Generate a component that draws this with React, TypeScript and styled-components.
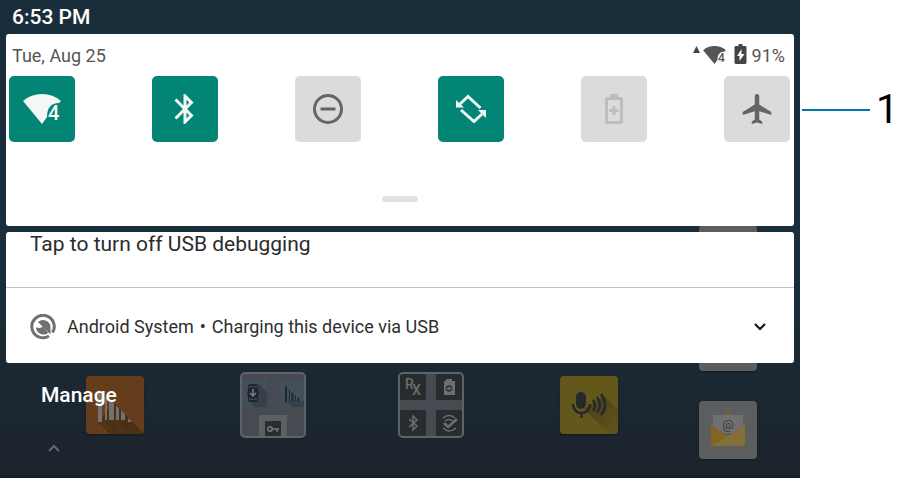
import React from "react";
import styled, { createGlobalStyle } from "styled-components";

const GlobalStyle = createGlobalStyle`
  * { box-sizing: border-box; }
  body {
    margin: 0;
    background: #fff;
    font-family: Roboto, "Noto Sans", sans-serif;
  }
  button { font: inherit; padding: 0; border: 0; background: none; color: inherit; }
  h2, p { margin: 0; font-weight: 400; }
  svg { display: block; flex: none; }
`;

const Figure = styled.main`
  display: flex;
  min-height: 100vh;
`;

const Device = styled.section`
  flex: 1;
  min-width: 0;
  display: grid;
  background: linear-gradient(#1a2d3b 0%, #192e3b 55%, #1b2832 80%, #1c232c 100%);
  border-bottom: 1px solid #141c28;
`;

const HomeScreen = styled.div`
  grid-area: 1 / 1;
  display: flex;
  align-items: flex-end;
  padding: 0 43px 18px 36px;
`;

const Dock = styled.div`
  flex: 1;
  display: grid;
  grid-template-columns: repeat(4, 1fr);
  place-items: center;
  margin: 0 31px 21px 0;
`;

const AppColumn = styled.div`
  display: flex;
  flex-direction: column;
  gap: 30px;
`;

const AppTile = styled.div<{ $color: string }>`
  width: 58px;
  height: 58px;
  border-radius: 4px;
  overflow: hidden;
  background: ${(p) => p.$color};
  box-shadow: 0 1px 2px rgba(0, 0, 0, 0.3);
`;

const Folder = styled.div`
  width: 66px;
  height: 66px;
  border: 2px solid #5d6367;
  border-radius: 5px;
  overflow: hidden;
  background: #454b50;
`;

const Shade = styled.div`
  grid-area: 1 / 1;
  z-index: 1;
  display: flex;
  flex-direction: column;
  padding: 0 6px;
`;

const Clock = styled.time`
  height: 34px;
  padding-left: 6px;
  line-height: 34px;
  font-size: 21px;
  font-weight: 500;
  color: #fff;
`;

const Card = styled.section`
  border-radius: 3px;
  background: #fff;
  overflow: hidden;
`;

const QuickSettings = styled(Card)`
  display: flex;
  flex-direction: column;
  height: 192px;
  margin-bottom: 6px;
`;

const StatusRow = styled.header`
  display: flex;
  justify-content: space-between;
  align-items: center;
  height: 42px;
  padding: 0 9px 0 6px;
  font-size: 18px;
  color: #555;
`;

const StatusIcons = styled.div`
  display: flex;
  align-items: center;
`;

const Percent = styled.span`
  margin-left: 5px;
`;

const Tiles = styled.div`
  display: flex;
  justify-content: space-between;
  padding: 0 4px 0 3px;
`;

const Tile = styled.button<{ $on?: boolean }>`
  display: grid;
  place-items: center;
  width: 66px;
  height: 66px;
  border-radius: 5px;
  background: ${(p) => (p.$on ? "#038575" : "#dbdbdb")};
  color: ${(p) => (p.$on ? "#f3f8f7" : "#656565")};

  &:disabled { color: #bdbdbd; }
`;

const Handle = styled.div`
  width: 36px;
  height: 6px;
  margin: auto auto 24px;
  border-radius: 3px;
  background: #e2e2e2;
`;

const NotificationTitle = styled.h2`
  height: 56px;
  padding-left: 24px;
  border-bottom: 1px solid #c0c3c4;
  font-size: 21px;
  line-height: 24px;
  color: #2b2b2b;
`;

const NotificationRow = styled.div`
  display: flex;
  align-items: center;
  height: 75px;
  padding: 2px 28px 0 24px;
  font-size: 18px;
  color: #2e2e2e;
`;

const Message = styled.p`
  flex: 1;
  display: flex;
  gap: 6px;
  padding-left: 11px;
`;

const IconButton = styled.button`
  color: #111;
`;

const Footer = styled.footer`
  display: flex;
  flex-direction: column;
  align-items: flex-start;
  padding: 20px 35px 0;
`;

const Manage = styled.button`
  line-height: 24px;
  font-size: 21px;
  font-weight: 500;
  color: #fff;
`;

const ExpandUp = styled.button`
  margin: 37px 0 0 7px;
  color: #66696c;
`;

const Callout = styled.aside`
  display: flex;
  align-items: center;
  align-self: flex-start;
  width: 111px;
  height: 48px;
  margin-top: 86px;
  padding-left: 2px;
  font: 40px/44px Roboto, sans-serif;
  color: #000;
`;

const Leader = styled.span`
  width: 68px;
  height: 2px;
  margin-right: 6px;
  background: #0079ad;
`;

function Wifi({ width, height }: { width: number; height: number }) {
  return (
    <svg width={width} height={height} viewBox="0 0 38 30" fill="currentColor">
      <path d="M0 7Q8 0 19 0T38 7L36 9C28 9 24 14 24 23L19 30Z" />
      <text x="25" y="26" fontSize="20" fontWeight="500" fontFamily="Roboto, sans-serif">4</text>
    </svg>
  );
}

function Bluetooth({ size }: { size: number }) {
  return (
    <svg width={size} height={size} viewBox="2 2 20 20" fill="currentColor">
      <path d="M17.71 7.71 12 2h-1v7.59L6.41 5 5 6.41 10.59 12 5 17.59 6.41 19 11 14.41V22h1l5.71-5.71-4.3-4.29 4.3-4.29zM13 5.83l1.88 1.88L13 9.59V5.83zm1.88 10.46L13 18.17v-3.76l1.88 1.88z" />
    </svg>
  );
}

function DoNotDisturb() {
  return (
    <svg width="30" height="30" viewBox="0 0 30 30" fill="none" stroke="currentColor" strokeWidth="3">
      <circle cx="15" cy="15" r="13.5" />
      <path d="M7.5 15h15" />
    </svg>
  );
}

function AutoRotate() {
  return (
    <svg width="30" height="30" viewBox="0 0 30 30" fill="none" stroke="currentColor" strokeWidth="3">
      <path d="M4 10 12 2.500 24.500 14M26 20 18 27.500 5 16" />
      <path d="M0 6v7.500h8zM30 24v-8h-8z" fill="currentColor" stroke="none" />
    </svg>
  );
}

function BatterySaver() {
  return (
    <svg width="18" height="30" viewBox="0 0 18 30" fill="none" stroke="currentColor" strokeWidth="3">
      <rect x="1.500" y="4.500" width="15" height="24" rx="1" />
      <path d="M5 1.500h8M9 12v9M4.500 16.500h9" />
    </svg>
  );
}

function Airplane() {
  return (
    <svg width="30" height="30" viewBox="2 2 20 20" fill="currentColor">
      <path d="M21.500 16v-2l-8-5V3.500C13.500 2.670 12.830 2 12 2s-1.500.670-1.500 1.500V9l-8 5v2l8-2.500V19l-2 1.500V22l3.500-1 3.500 1v-1.500L13.500 19v-5.500l8 2.500z" />
    </svg>
  );
}

const SignalMark = styled.svg`
  margin: 0 3px 12px 0;
`;

const ChargingBattery = styled.svg`
  margin: 0 0 2px 8px;
`;

function DebugIcon() {
  return (
    <svg width="26" height="26" viewBox="0 0 26 26" fill="none">
      <path d="M19 22A11.200 11.200 0 1 1 22.500 18.500" stroke="#707070" strokeWidth="3" />
      <path d="M8 8A7.500 7.500 0 0 1 20.500 14V20.500Z" fill="#707070" />
      <path d="M6 13.500l4 .5 3-1.500 5 6-1 1.500C11 22 6 18 6 13.500Z" fill="#707070" />
    </svg>
  );
}

function Chevron({ up }: { up?: boolean }) {
  return (
    <svg width="12" height="8" viewBox="0 0 12 8" fill="none" stroke="currentColor" strokeWidth="2">
      <path d={up ? "M1 7 6 2l5 5" : "M1 1l5 5 5-5"} />
    </svg>
  );
}

function BarcodeArt() {
  return (
    <svg width="58" height="58" viewBox="0 0 58 58">
      <path d="M12 46 24 58H58L28 27Z" fill="#4c3016" />
      <path d="M17 47l11 11M28 46l12 12" stroke="#533417" strokeWidth="3" />
      <path d="M12 14l4 3v29h-4zM19 21l2 1v22h-2zM23 25l5 2v17h-5zM30 30l3 2v12h-3zM35 34l4 4v6h-4zM42 42l4 4h-4z" fill="#74706d" />
    </svg>
  );
}

function VoiceArt() {
  return (
    <svg width="58" height="58" viewBox="0 0 58 58">
      <defs>
        <linearGradient id="voiceShadow" x1="0" y1="0" x2="1" y2="1">
          <stop offset="0.2" stopColor="#4b421b" />
          <stop offset="1" stopColor="#62551b" />
        </linearGradient>
      </defs>
      <path d="M24 33 49 58h9V34L44 20Z" fill="url(#voiceShadow)" />
      <rect x="16" y="16" width="10" height="17" rx="5" fill="#25292a" />
      <path d="M13 28c0 12 17 12 17 0M21.500 37v5M33 24q4 5 0 11M37 21q6 8 0 16M41 18q8 11 0 21" fill="none" stroke="#25292a" strokeWidth="2.500" />
    </svg>
  );
}

function MailArt() {
  return (
    <svg width="58" height="58" viewBox="0 0 58 58">
      <path d="M12 25 29 11 46 25Z" fill="#866029" />
      <path d="M14 14h30v18H14z" fill="#6e7072" />
      <path d="M12 24l17 11 17-11v19q0 2-2 2H14q-2 0-2-2z" fill="#85703a" />
      <path d="M12 24l17 11-16 10q-1 0-1-2z" fill="#826523" />
      <text x="29" y="28" textAnchor="middle" fontSize="13" fontFamily="Roboto, sans-serif" fill="#3b3e40">@</text>
    </svg>
  );
}

function ToolsFolderArt() {
  return (
    <svg width="62" height="62" viewBox="0 0 62 62">
      <path d="M0 5h25v28H0zM37 5h25v28H37z" fill="#434f5b" />
      <path d="M7 27 17 10 25 18V33H13zM44 27 62 27V33H50z" fill="#35404b" />
      <rect x="6" y="10" width="10" height="18" rx="2" fill="#20272d" />
      <path d="M7 13h8M7 25h8" stroke="#56616b" strokeWidth="1" />
      <circle cx="11" cy="19" r="5" fill="#20272d" stroke="#20272d" strokeWidth="2" strokeDasharray="2 1" />
      <path d="M11 15v7M8 19l3 3 3-3" fill="none" stroke="#78828a" strokeWidth="1.500" />
      <path d="M43 11l2 2v15h-2zM47 15l1 1v11h-1zM49.500 18l2 2v7h-2zM53 21l1 1v5h-1zM55.500 23l2 2v2h-2z" fill="#20272d" />
      <rect x="17" y="41" width="28" height="21" rx="1" fill="#5b6063" />
      <rect x="23" y="47" width="16" height="15" rx="1" fill="#2a2d30" />
      <path d="M30 55h7M35 55v3" fill="none" stroke="#777a7c" strokeWidth="1.500" />
      <circle cx="28" cy="55" r="2.200" fill="none" stroke="#777a7c" strokeWidth="1.500" />
    </svg>
  );
}

function UtilityFolderArt() {
  return (
    <svg width="62" height="62" viewBox="0 0 62 62">
      <g fill="#292c2e">
        <rect width="26" height="26" rx="2" />
        <rect x="36" width="26" height="26" rx="2" />
        <rect y="36" width="26" height="26" rx="2" />
        <rect x="36" y="36" width="26" height="26" rx="2" />
      </g>
      <g fill="#6c6e70" fontFamily="Roboto, sans-serif" fontWeight="500" fontSize="14">
        <text x="5" y="15">R</text>
        <text x="12" y="21">X</text>
      </g>
      <path d="M46 5h6v2h3v14H44V7h2z" fill="#6c6e70" />
      <path d="M46 14q3-4 6 0M52 15q-3 4-6 0" fill="none" stroke="#292c2e" strokeWidth="1.500" />
      <g fill="none" stroke="#6c6e70" strokeWidth="1.500">
        <path d="M9 45l8 7-4 4V42l4 4-8 7" />
        <path d="M43 44q6-5 12 0M45 47q4-3 8 0" />
        <path d="M43 54q6 6 13 0" />
        <path d="M44 49l4 4 9-8" strokeWidth="2.500" />
      </g>
    </svg>
  );
}

export default function App() {
  return (
    <>
      <GlobalStyle />
      <Figure>
        <Device>
          <HomeScreen>
            <Dock>
              <AppTile $color="#643e1c"><BarcodeArt /></AppTile>
              <Folder><ToolsFolderArt /></Folder>
              <Folder><UtilityFolderArt /></Folder>
              <AppTile $color="#64571b"><VoiceArt /></AppTile>
            </Dock>
            <AppColumn>
              <AppTile $color="#5c5d5f" />
              <AppTile $color="#5c5d5f" />
              <AppTile $color="#5c5d5f"><MailArt /></AppTile>
            </AppColumn>
          </HomeScreen>
          <Shade>
            <Clock>6:53 PM</Clock>
            <QuickSettings>
              <StatusRow>
                <span>Tue, Aug 25</span>
                <StatusIcons>
                  <SignalMark width="7" height="7" viewBox="0 0 7 7"><path d="M3.500 0 7 7H0z" fill="#444" /></SignalMark>
                  <Wifi width={23} height={18} />
                  <ChargingBattery width="13" height="20" viewBox="0 0 12 20">
                    <path d="M4 0h4v2h3l1 1v16l-1 1H1l-1-1V3l1-1h3z" fill="#444" />
                    <path d="M7 5v5h3l-5 7v-5H2.500z" fill="#fff" />
                  </ChargingBattery>
                  <Percent>91%</Percent>
                </StatusIcons>
              </StatusRow>
              <Tiles>
                <Tile $on aria-label="Wi-Fi"><Wifi width={38} height={30} /></Tile>
                <Tile $on aria-label="Bluetooth"><Bluetooth size={30} /></Tile>
                <Tile aria-label="Do not disturb"><DoNotDisturb /></Tile>
                <Tile $on aria-label="Auto-rotate"><AutoRotate /></Tile>
                <Tile disabled aria-label="Battery saver"><BatterySaver /></Tile>
                <Tile aria-label="Airplane mode"><Airplane /></Tile>
              </Tiles>
              <Handle />
            </QuickSettings>
            <Card>
              <NotificationTitle>Tap to turn off USB debugging</NotificationTitle>
              <NotificationRow>
                <DebugIcon />
                <Message>
                  <span>Android System</span>
                  <span>•</span>
                  <span>Charging this device via USB</span>
                </Message>
                <IconButton aria-label="Expand notification"><Chevron /></IconButton>
              </NotificationRow>
            </Card>
            <Footer>
              <Manage>Manage</Manage>
              <ExpandUp aria-label="Open app list"><Chevron up /></ExpandUp>
            </Footer>
          </Shade>
        </Device>
        <Callout>
          <Leader />
          <span>1</span>
        </Callout>
      </Figure>
    </>
  );
}
